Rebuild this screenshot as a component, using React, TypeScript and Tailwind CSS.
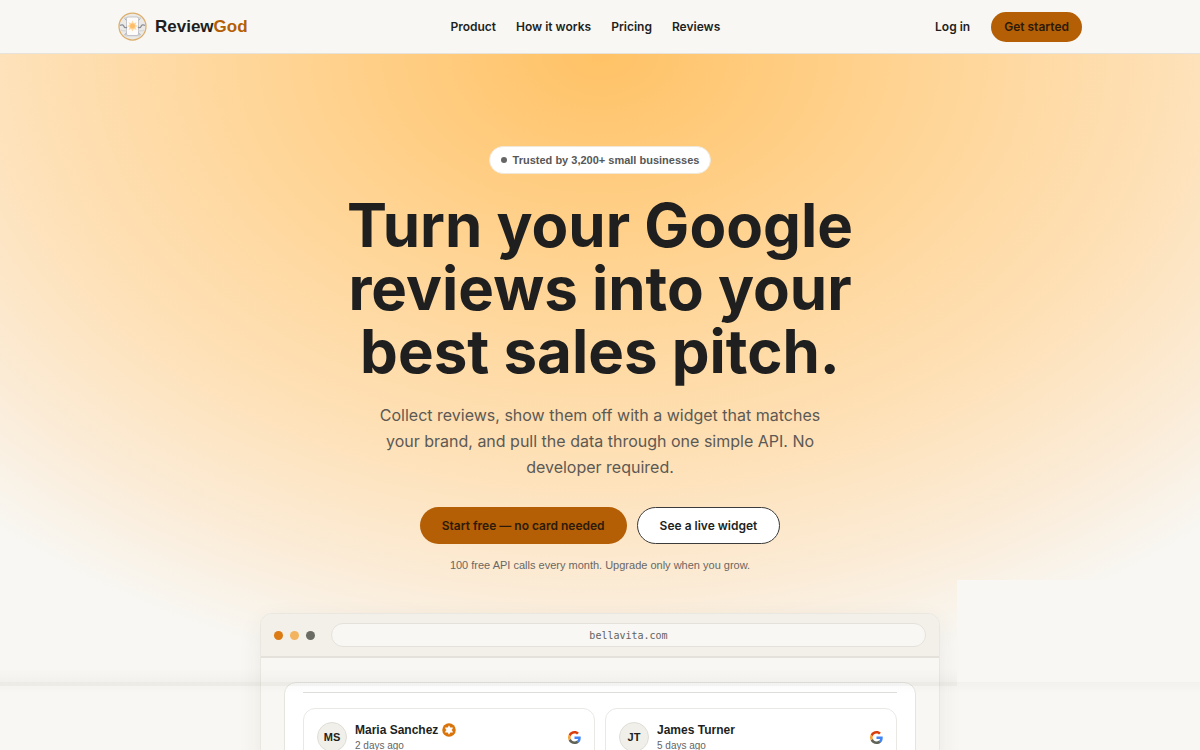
const navLinks = ["Product", "How it works", "Pricing", "Reviews"];

const reviews = [
  { initials: "MS", name: "Maria Sanchez", date: "2 days ago", verified: true },
  { initials: "JT", name: "James Turner", date: "5 days ago", verified: false },
];

function LogoMark() {
  return (
    <svg viewBox="0 0 58 58" className="h-[29px] w-[29px]" aria-hidden="true">
      <circle cx="29" cy="29" r="27" fill="#eceae7" stroke="#dcae6c" strokeWidth="2.5" />
      <path d="M12 10h34l-4 7H16zM12 49h34l-4-7H16z" fill="#d5d6da" />
      <path d="M13 13l6 6v20l-6 7M45 13l-6 6v20l6 7" fill="none" stroke="#b0b3ba" strokeWidth="2" />
      <rect x="17" y="10" width="24" height="37" rx="3" fill="#fdfcfa" stroke="#b4b7be" strokeWidth="1.5" />
      <path d="M4 27c4-3 7-1 8 2s4 3 6 1M54 27c-4-3-7-1-8 2s-4 3-6 1" fill="none" stroke="#8d9099" strokeWidth="2.5" />
      <path d="M6 36c4 2 8 3 12 0M52 36c-4 2-8 3-12 0" fill="none" stroke="#d0d2d6" strokeWidth="2" />
      <path
        d="M29 17l2.500 5.500 5.500-2-2 5.500L40 28l-5 2.500 2 5.500-5.500-2L29 39l-2.500-5-5.500 2 2-5.500L18 28l5-2-2-5.500 5.500 2z"
        fill="#ffd99f"
      />
      <circle cx="29" cy="28" r="5" fill="#fdbd69" />
    </svg>
  );
}

function GoogleIcon() {
  return (
    <svg viewBox="0 0 24 24" className="h-[13px] w-[13px]" aria-label="Google" role="img">
      <path fill="#4285f4" d="M23.500 12.300c0-.9-.1-1.500-.2-2.200H12v4.500h6.600c-.1 1.100-.9 2.800-2.500 3.900l3.800 3c2.300-2.100 3.600-5.200 3.600-9.200z" />
      <path fill="#5f6358" d="M12 24c3.200 0 6-1.100 7.900-2.900l-3.800-2.900c-1 .7-2.400 1.200-4.100 1.200-3.200 0-5.900-2.100-6.800-5l-3.900 3C3.200 21.300 7.300 24 12 24z" />
      <path fill="#f5a33b" d="M5.200 14.400c-.3-.8-.4-1.600-.4-2.400s.2-1.600.4-2.400l-3.900-3C.5 8.200 0 10 0 12s.5 3.800 1.300 5.400z" />
      <path fill="#d93f0b" d="M12 4.600c2.300 0 3.800 1 4.700 1.800l3.400-3.300C18 1.200 15.200 0 12 0 7.300 0 3.200 2.700 1.300 6.600l3.900 3c.9-2.900 3.600-5 6.800-5z" />
    </svg>
  );
}

function VerifiedBadge() {
  return (
    <svg viewBox="0 0 28 28" className="h-[14px] w-[14px]" role="img" aria-label="Verified">
      <circle cx="14" cy="14" r="13.500" fill="#d9730a" />
      <path
        d="M14 5.500l2.500 4.200 4.900-.1-2.400 4.400 2.400 4.400-4.900-.1-2.500 4.200-2.500-4.200-4.900.1L9 14 6.600 9.600l4.900.1z"
        fill="#fff"
        stroke="#fff"
        strokeLinejoin="round"
      />
    </svg>
  );
}

function Header() {
  return (
    <header className="border-b border-[#e5e3dc] bg-[#f8f7f3]">
      <div className="mx-auto flex h-[53px] max-w-[964px] items-center justify-between">
        <a href="#" className="flex items-center gap-2">
          <LogoMark />
          <span className="font-['Liberation_Sans',sans-serif] text-[17px] font-bold leading-6">
            Review<span className="text-[#b45f06]">God</span>
          </span>
        </a>
        <nav className="mr-3 flex gap-5 font-['Inter',sans-serif] text-[12px] font-semibold">
          {navLinks.map((link) => (
            <a key={link} href="#">
              {link}
            </a>
          ))}
        </nav>
        <div className="flex items-center gap-[21px] font-['Inter',sans-serif] text-[12px] font-semibold">
          <a href="#">Log in</a>
          <button className="h-[30px] rounded-full bg-[#b45f06] px-[13px] text-[#2c1a08]">Get started</button>
        </div>
      </div>
    </header>
  );
}

function ReviewCard({ review }: { review: (typeof reviews)[number] }) {
  return (
    <article className="flex h-[140px] flex-1 items-start rounded-xl border border-[#e9e8e4] bg-white px-[13px] pt-[13px]">
      <div className="flex h-[30px] w-[30px] items-center justify-center rounded-full border border-[#deddd6] bg-[#f0efe9] text-[11px] font-bold">
        {review.initials}
      </div>
      <div className="ml-2 flex-1">
        <div className="flex items-center gap-1 text-[12px] font-bold leading-4">
          {review.name}
          {review.verified && <VerifiedBadge />}
        </div>
        <p className="text-[10px] leading-4 text-[#656565]">{review.date}</p>
      </div>
      <div className="mt-[9px]">
        <GoogleIcon />
      </div>
    </article>
  );
}

function BrowserPreview() {
  return (
    <div className="mt-[39px] w-full max-w-[680px] overflow-hidden rounded-t-xl border border-[#e9e7df] bg-[#f8f7f3] shadow-[0_8px_24px_rgba(60,60,40,0.07)]">
      <div className="flex h-[44px] items-center border-b-2 border-[#e3e1da] bg-[#f2f0e8] px-[13px]">
        <div className="flex gap-[7px]">
          <span className="h-[9px] w-[9px] rounded-full bg-[#dc7a14]" />
          <span className="h-[9px] w-[9px] rounded-full bg-[#f3b45f]" />
          <span className="h-[9px] w-[9px] rounded-full bg-[#6a6b62]" />
        </div>
        <div className="ml-4 flex h-[24px] flex-1 items-center justify-center rounded-full border border-[#e3e1da] bg-[#f8f7f3] font-['DejaVu_Sans_Mono',monospace] text-[10px] text-[#63635f]">
          bellavita.com
        </div>
      </div>
      <div className="px-[23px] pt-6">
        <div className="rounded-t-xl border border-[#e6e4de] bg-white px-[18px] pt-[9px]">
          <div className="h-px bg-[#dfdedb]" />
          <div className="mt-[15px] flex gap-[10px]">
            {reviews.map((review) => (
              <ReviewCard key={review.name} review={review} />
            ))}
          </div>
        </div>
      </div>
    </div>
  );
}

function Hero() {
  return (
    <main className="relative flex flex-1 flex-col items-center bg-[#f8f7f3] bg-[radial-gradient(900px_640px_at_50%_0,#ffc266_0%,#ffd494_35%,#fee1b8_65%,#fbecd8_85%,#f8f7f3_100%)] pt-[92px]">
      <div className="absolute bottom-0 left-[957px] right-0 top-[526px] bg-[#f8f7f3]" />
      <div className="relative flex w-full flex-col items-center">
        <div className="flex h-[28px] items-center gap-[6px] rounded-full border border-[#f0e8d9] bg-white px-[11px] text-[11px] font-bold text-[#575757]">
          <span className="h-[6px] w-[6px] rounded-full bg-[#666]" />
          Trusted by 3,200+ small businesses
        </div>
        <h1 className="mt-5 text-center font-['Inter',sans-serif] text-[60px] font-bold leading-[63px] text-[#1e1f1e]">
          Turn your Google
          <br />
          reviews into your
          <br />
          best sales pitch.
        </h1>
        <p className="mt-[19px] text-center font-['Inter',sans-serif] text-[16px] leading-[26px] text-[#5c5954]">
          Collect reviews, show them off with a widget that matches
          <br />
          your brand, and pull the data through one simple API. No
          <br />
          developer required.
        </p>
        <div className="mt-[27px] flex gap-[10px] font-['Inter',sans-serif] text-[12px] font-semibold">
          <button className="h-[37px] rounded-full bg-[#b45f06] px-[22px] text-[#2c1a08]">
            Start free — no card needed
          </button>
          <button className="h-[37px] rounded-full border border-[#3b3b3b] bg-white px-[22px]">See a live widget</button>
        </div>
        <p className="mt-3 text-[11px] leading-[18px] text-[#6a6763]">
          100 free API calls every month. Upgrade only when you grow.
        </p>
        <BrowserPreview />
      </div>
      {/* soft fold shadow running across the page */}
      <div className="pointer-events-none absolute left-0 right-[243px] top-[614px] h-[18px] bg-linear-to-b from-transparent to-[#5555440c]" />
      <div className="pointer-events-none absolute left-0 right-0 top-[628px] h-[12px] bg-linear-to-b from-[#55554409] to-transparent" />
    </main>
  );
}

export default function App() {
  return (
    <div className="flex h-screen flex-col overflow-hidden bg-[#f8f7f3] font-['Liberation_Sans',sans-serif] text-[#1e1f1e]">
      <Header />
      <Hero />
    </div>
  );
}
